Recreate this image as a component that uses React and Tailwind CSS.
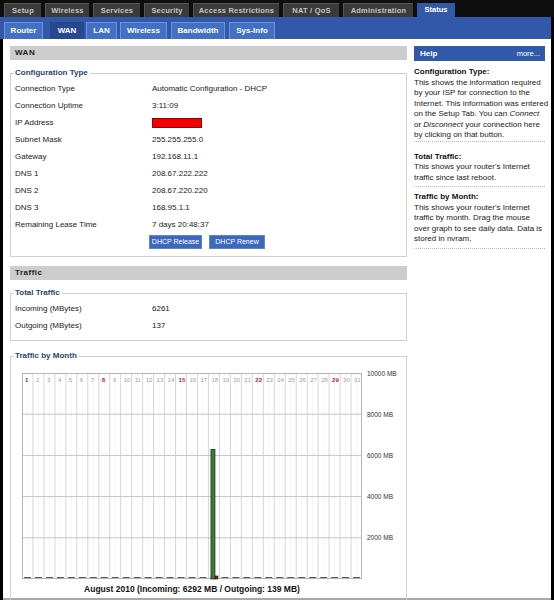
import React from "react";

const topTabs = [
  { label: "Setup", cls: "ml-[4px] w-[37px]" },
  { label: "Wireless", cls: "ml-[4px] w-[44px]" },
  { label: "Services", cls: "ml-[4px] w-[47px]" },
  { label: "Security", cls: "ml-[4px] w-[45px]" },
  { label: "Access Restrictions", cls: "ml-[4px] w-[86px]" },
  { label: "NAT / QoS", cls: "ml-[4px] w-[56px]" },
  { label: "Administration", cls: "ml-[4px] w-[70px]" },
];

const subTabs = [
  { label: "Router", cls: "ml-[4px] w-[39px]" },
  { label: "WAN", cls: "ml-[7px] w-[34px]", active: true },
  { label: "LAN", cls: "ml-[2px] w-[31px]" },
  { label: "Wireless", cls: "ml-[3px] w-[47px]" },
  { label: "Bandwidth", cls: "ml-[4px] w-[54px]" },
  { label: "Sys-Info", cls: "ml-[4px] w-[46px]" },
];

const wanRows = [
  ["Connection Type", "Automatic Configuration - DHCP"],
  ["Connection Uptime", "3:11:09"],
  ["IP Address", null],
  ["Subnet Mask", "255.255.255.0"],
  ["Gateway", "192.168.11.1"],
  ["DNS 1", "208.67.222.222"],
  ["DNS 2", "208.67.220.220"],
  ["DNS 3", "168.95.1.1"],
  ["Remaining Lease Time", "7 days 20:48:37"],
];

function SectionHeader({ children, className = "" }) {
  return (
    <div className={`h-[14px] bg-[#cdcdcd] pl-[5px] text-[8px] font-bold leading-[14px] tracking-[0.5px] text-[#1a1a1a] ${className}`}>
      {children}
    </div>
  );
}

function Fieldset({ legend, className = "", children }) {
  return (
    <fieldset className={`border border-[#d0d0d0] ${className}`}>
      <legend className="ml-[3px] pl-[1px] pr-[2px] text-[8px] font-bold leading-[10px] text-[#2b4471]">
        {legend}
      </legend>
      {children}
    </fieldset>
  );
}

function Row({ label, children }) {
  return (
    <div className="flex h-[17px] items-center pl-[4px] text-[8px] text-[#222]">
      <div className="w-[137px]">{label}</div>
      <div>{children}</div>
    </div>
  );
}

// monthly traffic chart
function TrafficChart() {
  const x0 = 11;
  const y0 = 12;
  const w = 340;
  const h = 206;
  const colW = w / 31;
  const days = Array.from({ length: 31 }, (_, i) => i + 1);
  const sundays = [1, 8, 15, 22, 29];
  const levels = [10000, 8000, 6000, 4000, 2000];

  return (
    <svg width="395" height="223" className="block">
      <rect x={x0} y={y0} width={w} height={h} fill="#fff" />
      {days.map((d) => {
        const cx = x0 + (d - 1) * colW;
        return (
          <g key={d}>
            <line x1={cx + colW * 0.5} y1={y0} x2={cx + colW * 0.5} y2={y0 + h} stroke="#ececec" strokeWidth="1" strokeDasharray="1 1" />
            {d > 1 && <line x1={cx} y1={y0} x2={cx} y2={y0 + h} stroke="#d6d6d6" strokeWidth="1" />}
            <text
              x={cx + 3}
              y={y0 + 8.5}
              fontSize="6"
              fontFamily="Liberation Sans, Arial, sans-serif"
              fontWeight={sundays.includes(d) ? "bold" : "normal"}
              fill={sundays.includes(d) ? "#a0303a" : "#a0a0a0"}
            >
              {d}
            </text>
            <line x1={cx + 2} y1={y0 + h - 1} x2={cx + 9} y2={y0 + h - 1} stroke="#222" strokeWidth="1.5" />
          </g>
        );
      })}
      {levels.map((v, i) => {
        const ly = y0 + (i * h) / 5;
        return (
          <g key={v}>
            {i > 0 && <line x1={x0} y1={ly} x2={x0 + w} y2={ly} stroke="#c4c4c4" strokeWidth="1" />}
            <text x={356} y={ly + 2.5} fontSize="6.5" fontFamily="Liberation Sans, Arial, sans-serif" fill="#333">
              {v} MB
            </text>
          </g>
        );
      })}
      <rect x={x0 + 0.5} y={y0 + 0.5} width={w - 1} height={h - 1} fill="none" stroke="#b4b4b4" strokeWidth="1" />
      {/* day 18 */}
      <rect x={x0 + 17 * colW + 2.5} y={y0 + h - (6292 / 10000) * h} width="4" height={(6292 / 10000) * h} fill="#3b7a38" stroke="#1c3d1a" strokeWidth="0.8" />
      <rect x={x0 + 17 * colW + 6.5} y={y0 + h - 3} width="3" height="3" fill="#8a1c22" stroke="#3a0a0a" strokeWidth="0.6" />
    </svg>
  );
}

function HelpBlock({ title, lines, className = "", sepClass = "mt-[3px]" }) {
  return (
    <div className={className}>
      <div className="text-[8px] font-bold leading-[10.5px] text-[#111]">{title}</div>
      <div className="whitespace-nowrap text-[8px] leading-[10.5px] text-[#222]">
        {lines.map((l, i) => (
          <div key={i}>{l}</div>
        ))}
      </div>
      <div className={`${sepClass} border-b border-dotted border-[#bdbdbd]`} />
    </div>
  );
}

export default function App() {
  return (
    <div className="relative h-[600px] w-[554px] overflow-hidden bg-black font-['Liberation_Sans',Arial,sans-serif]">
      {/* top tabs */}
      <div className="flex h-[17px] items-end bg-[#0e0e0e]">
        {topTabs.map((t) => (
          <div
            key={t.label}
            className={`${t.cls} h-[14px] border-t border-l border-[#555] bg-[#3b3b3b] text-center text-[7.5px] font-bold leading-[13px] tracking-[0.2px] text-[#c4c4c4]`}
          >
            {t.label}
          </div>
        ))}
        <div className="ml-[4px] h-[14px] w-[38px] bg-[#3259a9] text-center text-[7.5px] font-bold leading-[13px] text-white">
          Status
        </div>
      </div>

      {/* sub tabs */}
      <div className="flex h-[22px] w-[551px] items-end bg-[#3259a9]">
        {subTabs.map((t) => (
          <div
            key={t.label}
            className={`${t.cls} h-[17px] border-t border-l border-r text-center text-[8px] font-bold leading-[16px] text-white ${
              t.active ? "border-[#24468c] bg-[#28498f]" : "border-[#6f93d6] bg-[#4170c4]"
            }`}
          >
            {t.label}
          </div>
        ))}
      </div>

      {/* content */}
      <div className="ml-[3px] flex h-[561px] w-[548px] border-b-2 border-[#a8a8a8] bg-white pt-[7px] pl-[7px]">
        <div className="w-[397px]">
          <SectionHeader>WAN</SectionHeader>
          <Fieldset legend="Configuration Type" className="mt-[8px] pt-[2px] pb-[6px]">
            {wanRows.map(([label, value]) => (
              <Row key={label} label={label}>
                {value === null ? (
                  <div className="h-[10px] w-[50px] border border-[#9c0000] bg-[#f00000]" />
                ) : (
                  value
                )}
              </Row>
            ))}
            <div className="flex h-[17px] items-center pl-[138px]">
              <button className="h-[14px] w-[53px] whitespace-nowrap border border-[#5c86cf] bg-[#3d69bd] text-[7px] leading-[12px] text-white">
                DHCP Release
              </button>
              <button className="ml-[7px] h-[14px] w-[56px] whitespace-nowrap border border-[#5c86cf] bg-[#3d69bd] text-[7px] leading-[12px] text-white">
                DHCP Renew
              </button>
            </div>
          </Fieldset>

          <SectionHeader className="mt-[9px]">Traffic</SectionHeader>
          <Fieldset legend="Total Traffic" className="mt-[8px] pt-[2px] pb-[6px]">
            <Row label="Incoming (MBytes)">6261</Row>
            <Row label="Outgoing (MBytes)">137</Row>
          </Fieldset>

          <Fieldset legend="Traffic by Month" className="mt-[10px] pb-[30px]">
            <TrafficChart />
            <div className="ml-[11px] w-[340px] text-center text-[8.5px] font-bold leading-[10px] text-[#111]">
              August 2010 (Incoming: 6292 MB / Outgoing: 139 MB)
            </div>
          </Fieldset>
        </div>

        {/* help */}
        <div className="ml-[7px] w-[131px]">
          <div className="flex h-[15px] items-center justify-between bg-[#3259a9] pl-[6px] pr-[5px] text-white">
            <span className="text-[8px] font-bold">Help</span>
            <span className="text-[7.5px]">more...</span>
          </div>
          <HelpBlock
            className="mt-[6px]"
            sepClass="mt-0"
            title="Configuration Type:"
            lines={[
              "This shows the information required",
              "by your ISP for connection to the",
              "Internet. This information was entered",
              <>on the Setup Tab. You can <i>Connect</i></>,
              <>or <i>Disconnect</i> your connection here</>,
              "by clicking on that button.",
            ]}
          />
          <HelpBlock
            className="mt-[10px]"
            title="Total Traffic:"
            lines={["This shows your router's Internet", "traffic since last reboot."]}
          />
          <HelpBlock
            className="mt-[5px]"
            title="Traffic by Month:"
            lines={[
              "This shows your router's Internet",
              "traffic by month. Drag the mouse",
              "over graph to see daily data. Data is",
              "stored in nvram.",
            ]}
          />
        </div>
      </div>
    </div>
  );
}
